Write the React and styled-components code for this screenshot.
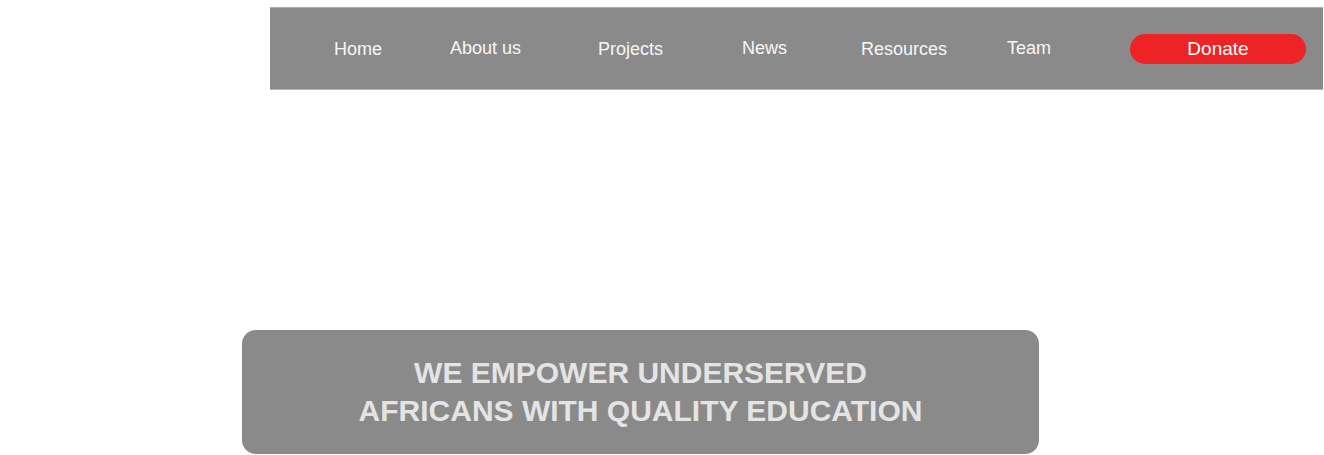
import React from "react";
import styled, { createGlobalStyle } from "styled-components";

const Global = createGlobalStyle`
  html, body { margin: 0; padding: 0; background: #ffffff; }
  body { font-family: "Liberation Sans", Arial, Helvetica, sans-serif; }
`;

const Page = styled.div`
  display: flex;
  flex-direction: column;
  padding-top: 7px;
`;

const Header = styled.header`
  margin-left: 270px;
  width: 1053px;
  height: 83px;
  box-sizing: border-box;
  background: #8a8a8a;
  border-top: 1px solid #ababab;
  border-bottom: 1px solid #b4b4b4;
  display: flex;
  align-items: center;
  padding-left: 64px;
`;

const NavItem = styled.a`
  width: ${(p) => p.$w}px;
  flex: none;
  color: #f7f7f7;
  font-size: 18px;
  text-decoration: none;
  transform: translateY(${(p) => p.$dy || 0}px);
  white-space: nowrap;
`;

const Donate = styled.button`
  width: 176px;
  height: 30px;
  border: none;
  border-radius: 15px;
  background: #ee2326;
  color: #ffffff;
  font-family: "Liberation Sans", Arial, sans-serif;
  font-size: 19px;
  padding: 0;
  margin-top: 1px;
  cursor: pointer;
`;

const Hero = styled.section`
  margin: 240px 0 0 242px;
  width: 797px;
  height: 124px;
  box-sizing: border-box;
  background: #8a8a8a;
  border-radius: 14px;
  display: flex;
  align-items: center;
  justify-content: center;
`;

const Headline = styled.h1`
  margin: 0;
  text-align: center;
  color: #e4e4e4;
  font-family: "Liberation Sans", Arial, sans-serif;
  font-weight: 700;
  font-size: 30px;
  line-height: 38px;
`;

const links = [
  { label: "Home", w: 116, dy: 1 },
  { label: "About us", w: 148, dy: 0 },
  { label: "Projects", w: 144, dy: 1 },
  { label: "News", w: 119, dy: 0 },
  { label: "Resources", w: 146, dy: 1 },
  { label: "Team", w: 123, dy: 0 },
];

export default function App() {
  return (
    <>
      <Global />
      <Page>
        <Header>
          {links.map((l) => (
            <NavItem key={l.label} $w={l.w} $dy={l.dy}>
              {l.label}
            </NavItem>
          ))}
          <Donate>Donate</Donate>
        </Header>
        <Hero>
          <Headline>
            WE EMPOWER UNDERSERVED
            <br />
            AFRICANS WITH QUALITY EDUCATION
          </Headline>
        </Hero>
      </Page>
    </>
  );
}
